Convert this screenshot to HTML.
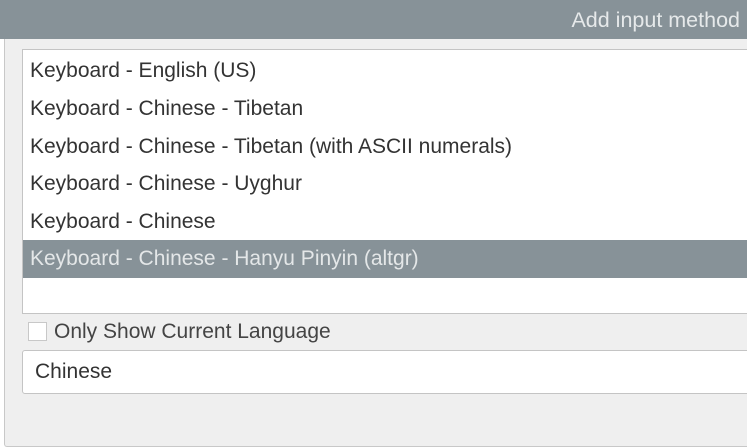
<!DOCTYPE html>
<html><head><style>
*{margin:0;padding:0;box-sizing:border-box}
body{width:747px;height:448px;overflow:hidden;background:#fff;font-family:"Liberation Sans",sans-serif;position:relative}
.hdr{position:absolute;left:0;top:0;width:747px;height:39px;background:#879298;color:#e6e9ea;font-size:21.5px;text-align:right;padding-right:7px;line-height:40px}
.dlg{position:absolute;left:4px;top:39px;width:760px;height:408px;background:#efefef;border-left:1px solid #c8c8c8;border-bottom:1px solid #c8c8c8;border-radius:0 0 0 3px}
.list{position:absolute;left:22px;top:49px;width:740px;height:265px;background:#fff;border:1px solid #c4c4c4}
.row{position:absolute;left:0;width:740px;height:38px;line-height:38px;padding-left:7px;font-size:21px;color:#333}
.sel{background:#879298;color:#e4e7e8}
.cb{position:absolute;left:28px;top:322px;width:19px;height:19px;background:#fff;border:1px solid #c8c8c8}
.lbl{position:absolute;left:54px;top:320px;font-size:21px;color:#444;line-height:24px}
.combo{position:absolute;left:22px;top:350px;width:740px;height:44px;background:#fff;border:1px solid #c4c4c4;border-radius:3px;font-size:21px;color:#333;line-height:42px;padding-left:12px}
</style></head><body>
<div class="hdr">Add input method</div>
<div class="dlg"></div>
<div class="list">
<div class="row" style="top:2px">Keyboard - English (US)</div>
<div class="row" style="top:40px">Keyboard - Chinese - Tibetan</div>
<div class="row" style="top:78px">Keyboard - Chinese - Tibetan (with ASCII numerals)</div>
<div class="row" style="top:115px">Keyboard - Chinese - Uyghur</div>
<div class="row" style="top:153px">Keyboard - Chinese</div>
<div class="row sel" style="top:190px">Keyboard - Chinese - Hanyu Pinyin (altgr)</div>
</div>
<div class="cb"></div>
<div class="lbl">Only Show Current Language</div>
<div class="combo">Chinese</div>
</body></html>
